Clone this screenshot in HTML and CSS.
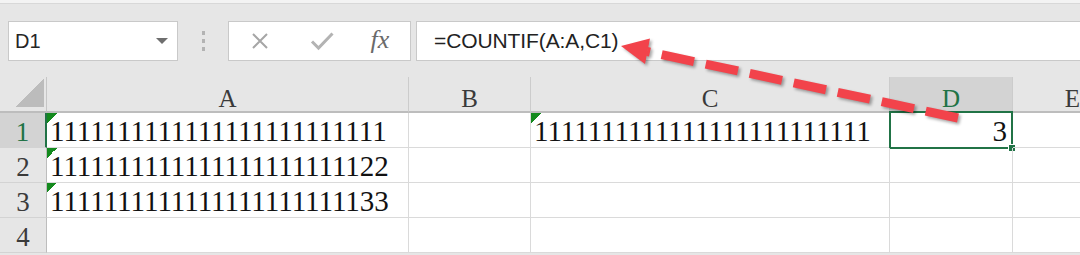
FILE: index.html
```html
<!DOCTYPE html>
<html>
<head>
    <link rel="stylesheet" href="styles.css">
</head>
<body>
    <div class="toolbar">
        <div class="namebox">
            <span>D1</span>
            <span class="caret"></span>
        </div>
        <div class="grip"><i></i><i></i><i></i></div>
        <div class="fx-buttons">
            <span class="slot">
                <svg width="18" height="16" viewBox="0 0 18 16"><path d="M2 1 L16 15 M16 1 L2 15" stroke="#a6a6a6" stroke-width="2" fill="none"/></svg>
            </span>
            <span class="slot">
                <svg width="24" height="20" viewBox="0 0 24 20"><path d="M2 10.5 L8.5 17 L22.5 2.5" stroke="#b3b3b3" stroke-width="3" fill="none"/></svg>
            </span>
            <span class="slot fx">fx</span>
        </div>
        <div class="formula">=COUNTIF(A:A,C1)</div>
    </div>

    <div class="sheet">
        <!-- column headers -->
        <div class="corner"></div>
        <div class="col-head">A</div>
        <div class="col-head">B</div>
        <div class="col-head">C</div>
        <div class="col-head active">D</div>
        <div class="col-head">E</div>

        <!-- row 1 -->
        <div class="row-head active">1</div>
        <div class="cell flag">1111111111111111111111111</div>
        <div class="cell"></div>
        <div class="cell flag">1111111111111111111111111</div>
        <div class="cell num selected">3</div>
        <div class="cell"></div>

        <!-- row 2 -->
        <div class="row-head">2</div>
        <div class="cell flag">1111111111111111111111122</div>
        <div class="cell"></div>
        <div class="cell"></div>
        <div class="cell"></div>
        <div class="cell"></div>

        <!-- row 3 -->
        <div class="row-head">3</div>
        <div class="cell flag">1111111111111111111111133</div>
        <div class="cell"></div>
        <div class="cell"></div>
        <div class="cell"></div>
        <div class="cell"></div>

        <!-- row 4 -->
        <div class="row-head">4</div>
        <div class="cell"></div>
        <div class="cell"></div>
        <div class="cell"></div>
        <div class="cell"></div>
        <div class="cell"></div>
    </div>

    <svg class="arrow" width="1080" height="255" viewBox="0 0 1080 255">
        <line x1="958" y1="118" x2="647" y2="51.5" stroke="#f2434b" stroke-width="9" stroke-dasharray="33 12"/>
        <polygon points="621,46 650,38.5 645,64" fill="#f2434b"/>
    </svg>
</body>
</html>
```

FILE: styles.css
```css
body {
    margin: 0;
    width: 1080px;
    height: 255px;
    overflow: hidden;
    background: #e6e6e6;
    font-family: "Liberation Sans", Arial, sans-serif;
    position: relative;
}

.toolbar {
    height: 77px;
    box-sizing: border-box;
    padding-top: 21px;
    display: flex;
    align-items: flex-start;
    background: linear-gradient(#f3f3f3 0 3px, #d8d8d8 3px 4px, #e6e6e6 4px);
}

.namebox,
.fx-buttons,
.formula {
    height: 40px;
    box-sizing: border-box;
    background: #fff;
    border: 1px solid #c9c9c9;
    display: flex;
    align-items: center;
}

.namebox {
    margin-left: 8px;
    width: 170px;
    padding: 0 9px 0 6px;
    justify-content: space-between;
    font-size: 20px;
    color: #262626;
}

.caret {
    width: 0;
    height: 0;
    border-left: 6px solid transparent;
    border-right: 6px solid transparent;
    border-top: 6px solid #6e6e6e;
}

.grip {
    width: 50px;
    height: 40px;
    display: flex;
    flex-direction: column;
    align-items: center;
    justify-content: center;
    gap: 4px;
}

.grip i {
    width: 3px;
    height: 4px;
    background: #b3b3b3;
}

.fx-buttons {
    width: 183px;
}

.slot {
    width: 62px;
    display: flex;
    justify-content: center;
    align-items: center;
}

.fx {
    width: 54px;
    font-family: "Liberation Serif", "Times New Roman", serif;
    font-style: italic;
    font-size: 26px;
    color: #6a6a6a;
    padding-bottom: 2px;
}

.formula {
    margin-left: 5px;
    flex: 1;
    margin-right: -4px;
    padding-left: 17px;
    font-size: 21px;
    letter-spacing: -0.1px;
    color: #222;
}

.sheet {
    display: grid;
    grid-template-columns: 47px 362px 122px 359px 123px 120px;
    grid-template-rows: 36px 35px 35px 35px 35px;
    font-family: "Liberation Serif", "Times New Roman", serif;
    background: #fff;
}

.corner,
.col-head,
.row-head,
.cell {
    box-sizing: border-box;
    position: relative;
}

.corner {
    background: #e6e6e6 linear-gradient(135deg, transparent 50%, #bcbcbc 50%) no-repeat right 2px bottom 4px / 28px 28px;
    border-right: 1px solid #c6c6c6;
    border-bottom: 2px solid #bdbdbd;
}

.col-head {
    background: #e6e6e6;
    border-right: 1px solid #cccccc;
    border-bottom: 2px solid #bdbdbd;
    display: flex;
    justify-content: center;
    align-items: flex-end;
    font-size: 25px;
    line-height: 1;
    color: #3a3a3a;
}

.col-head.active {
    background: #d3d3d3;
    color: #217346;
}

.row-head {
    background: #e6e6e6;
    border-right: 1px solid #bdbdbd;
    border-bottom: 1px solid #d3d3d3;
    display: flex;
    justify-content: center;
    align-items: flex-end;
    font-size: 27px;
    line-height: 1;
    padding-bottom: 1px;
    color: #3a3a3a;
}

.row-head.active {
    background: #d3d3d3;
    border-right: 2px solid #217346;
    color: #217346;
}

.cell {
    border-right: 1px solid #dadada;
    border-bottom: 1px solid #dadada;
    display: flex;
    align-items: flex-end;
    padding: 0 0 1px 3px;
    font-size: 29px;
    line-height: 1;
    color: #111;
    white-space: nowrap;
}

.cell.flag {
    background: linear-gradient(135deg, #148a1e 50%, transparent 50%) no-repeat left top / 10px 10px;
}

.cell.num {
    justify-content: flex-end;
    padding-right: 5px;
}

.cell.selected::before {
    content: "";
    position: absolute;
    left: -1px;
    right: -1px;
    top: -2px;
    bottom: -2px;
    border: 2px solid #217346;
}

.cell.selected::after {
    content: "";
    position: absolute;
    right: -4px;
    bottom: -5px;
    width: 6px;
    height: 6px;
    background: #217346;
    border: 1px solid #fff;
}

.arrow {
    position: absolute;
    left: 0;
    top: 0;
    pointer-events: none;
    filter: drop-shadow(2px 2px 1.5px rgba(0, 0, 0, 0.35));
}
```
